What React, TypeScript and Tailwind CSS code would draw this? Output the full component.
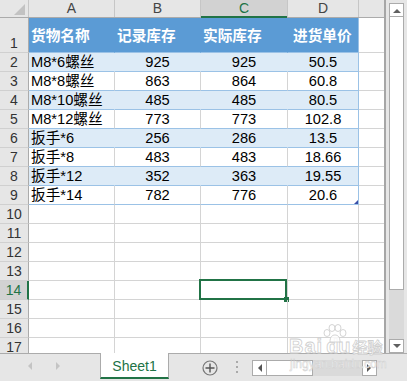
import React from "react";

const data: [string, string, string, string][] = [
  ["M8*6螺丝", "925", "925", "50.5"],
  ["M8*8螺丝", "863", "864", "60.8"],
  ["M8*10螺丝", "485", "485", "80.5"],
  ["M8*12螺丝", "773", "773", "102.8"],
  ["扳手*6", "256", "286", "13.5"],
  ["扳手*8", "483", "483", "18.66"],
  ["扳手*12", "352", "363", "19.55"],
  ["扳手*14", "782", "776", "20.6"],
];

function RowHead({ n, sel }: { n: number; sel?: boolean }) {
  return (
    <div
      className={
        sel
          ? "w-[29px] shrink-0 h-full border-r-2 border-r-[#217346] border-b border-b-[#d0d0d0] bg-[#d2d2d2] text-[#217346] flex items-end justify-center leading-[18px] text-[14px]"
          : "w-[29px] shrink-0 h-full border-r border-r-[#ababab] border-b border-b-[#d0d0d0] bg-[#e6e6e6] text-[#333] flex items-end justify-center leading-[18px] text-[14px]"
      }
    >
      <span>{n}</span>
    </div>
  );
}

function TriUp() {
  return (
    <svg width="8" height="5" viewBox="0 0 8 5">
      <path d="M0 5 L4 1 L8 5 Z" fill="#606060" />
    </svg>
  );
}
function TriDown() {
  return (
    <svg width="8" height="5" viewBox="0 0 8 5">
      <path d="M0 0 L4 4 L8 0 Z" fill="#606060" />
    </svg>
  );
}
function TriLeft({ c }: { c: string }) {
  return (
    <svg width="5" height="8" viewBox="0 0 5 8">
      <path d="M5 0 L1 4 L5 8 Z" fill={c} />
    </svg>
  );
}
function TriRight({ c }: { c: string }) {
  return (
    <svg width="5" height="8" viewBox="0 0 5 8">
      <path d="M0 0 L4 4 L0 8 Z" fill={c} />
    </svg>
  );
}

export default function App() {
  const emptyRows = [10, 11, 12, 13, 14, 15, 16, 17];
  return (
    <div className="relative w-[407px] h-[381px] overflow-hidden bg-[#e6e6e6] flex flex-col font-['Liberation_Sans','Noto_Sans_CJK_SC',sans-serif] text-[14.67px] text-black">
      <div className="flex h-[353px] shrink-0">
        <div className="relative w-[386px] h-[353px] shrink-0 overflow-hidden bg-white border-r-2 border-[#a6a6a6]">
          {/* column headers */}
          <div className="flex h-[18px] border-b border-[#ababab] bg-[#e6e6e6] text-[#444] text-[14px] leading-[17px]">
            <div className="w-[29px] shrink-0 border-r border-[#c6c6c6] flex items-end justify-end pr-[3px] pb-[2px]">
              <svg width="11" height="11" viewBox="0 0 11 11">
                <path d="M11 0 L11 11 L0 11 Z" fill="#c2c2c2" />
              </svg>
            </div>
            <div className="w-[86px] shrink-0 border-r border-[#c6c6c6] text-center">A</div>
            <div className="w-[86px] shrink-0 border-r border-[#c6c6c6] text-center">B</div>
            <div className="relative w-[87px] shrink-0 border-r border-[#c6c6c6] bg-[#d2d2d2] text-[#217346] text-center">
              C
              <div className="absolute left-0 right-0 bottom-[-1px] h-[2px] bg-[#217346]" />
            </div>
            <div className="w-[71px] shrink-0 border-r border-[#c6c6c6] text-center">D</div>
            <div className="flex-1" />
          </div>

          {/* row 1 header */}
          <div className="flex h-[35px]">
            <RowHead n={1} />
            <div className="w-[86px] shrink-0 border-r border-b border-r-[#5b9bd5] border-b-[#9bc2e6] bg-[#5b9bd5] text-white font-bold flex items-center pl-[2px] pt-[2px] whitespace-nowrap">货物名称</div>
            <div className="w-[86px] shrink-0 border-r border-b border-r-[#5b9bd5] border-b-[#9bc2e6] bg-[#5b9bd5] text-white font-bold flex items-center pl-[2px] pt-[2px] whitespace-nowrap">记录库存</div>
            <div className="w-[87px] shrink-0 border-r border-b border-r-[#5b9bd5] border-b-[#9bc2e6] bg-[#5b9bd5] text-white font-bold flex items-center pl-[2px] pt-[2px] whitespace-nowrap">实际库存</div>
            <div className="w-[71px] shrink-0 border-r border-b border-r-[#9bc2e6] border-b-[#9bc2e6] bg-[#5b9bd5] text-white font-bold flex items-center pl-[5px] pt-[2px] whitespace-nowrap">进货单价</div>
            <div className="flex-1 border-b border-b-[#d4d4d4]" />
          </div>

          {/* data rows */}
          {data.map((r, i) => {
            const band = i % 2 === 0;
            const last = i === data.length - 1;
            return (
              <div key={i} className="flex h-[19px] leading-[18px]">
                <RowHead n={i + 2} />
                <div className={band ? "w-[86px] shrink-0 border-r border-b border-r-[#ddebf7] border-b-[#9bc2e6] bg-[#ddebf7] pl-[2px] whitespace-nowrap" : "w-[86px] shrink-0 border-r border-b border-r-[#d4d4d4] border-b-[#9bc2e6] bg-white pl-[2px] whitespace-nowrap"}>{r[0]}</div>
                <div className={band ? "w-[86px] shrink-0 border-r border-b border-r-[#ddebf7] border-b-[#9bc2e6] bg-[#ddebf7] text-center" : "w-[86px] shrink-0 border-r border-b border-r-[#d4d4d4] border-b-[#9bc2e6] bg-white text-center"}>{r[1]}</div>
                <div className={band ? "w-[87px] shrink-0 border-r border-b border-r-[#ddebf7] border-b-[#9bc2e6] bg-[#ddebf7] text-center" : "w-[87px] shrink-0 border-r border-b border-r-[#d4d4d4] border-b-[#9bc2e6] bg-white text-center"}>{r[2]}</div>
                <div className={band ? "relative w-[71px] shrink-0 border-r border-b border-r-[#9bc2e6] border-b-[#9bc2e6] bg-[#ddebf7] text-center" : "relative w-[71px] shrink-0 border-r border-b border-r-[#9bc2e6] border-b-[#9bc2e6] bg-white text-center"}>
                  {r[3]}
                  {last && (
                    <svg className="absolute right-[0px] bottom-[0px]" width="4" height="4" viewBox="0 0 4 4">
                      <path d="M4 0 L4 4 L0 4 Z" fill="#3a4fa8" />
                    </svg>
                  )}
                </div>
                <div className="flex-1 border-b border-b-[#d4d4d4]" />
              </div>
            );
          })}

          {/* empty rows */}
          {emptyRows.map((n) => (
            <div key={n} className="flex h-[19px] leading-[18px]">
              <RowHead n={n} sel={n === 14} />
              <div className="w-[86px] shrink-0 border-r border-b border-[#d4d4d4]" />
              <div className="w-[86px] shrink-0 border-r border-b border-[#d4d4d4]" />
              <div className="relative w-[87px] shrink-0 border-r border-b border-[#d4d4d4]">
                {n === 14 && (
                  <>
                    <div className="absolute left-[-2px] top-[-2px] right-0 bottom-[-1px] border-2 border-[#217346]" />
                    <div className="absolute right-[-2px] bottom-[-3px] w-[5px] h-[5px] bg-[#217346]" />
                  </>
                )}
              </div>
              <div className="w-[71px] shrink-0 border-r border-b border-[#d4d4d4]" />
              <div className="flex-1 border-b border-b-[#d4d4d4]" />
            </div>
          ))}
        </div>

        {/* vertical scrollbar */}
        <div className="w-[21px] h-[353px] shrink-0 flex flex-col pt-[3px] px-[3px] bg-[#e6e6e6]">
          <div className="h-[14px] shrink-0 border border-[#ababab] bg-white flex items-center justify-center">
            <TriUp />
          </div>
          <div className="h-[273px] shrink-0 border border-t-0 border-[#ababab] bg-white" />
          <div className="flex-1 bg-[#dadada]" />
          <div className="h-[14px] shrink-0 border border-[#ababab] bg-white flex items-center justify-center">
            <TriDown />
          </div>
        </div>
      </div>

      {/* tab bar */}
      <div className="flex h-[28px] shrink-0 bg-[#e6e6e6]">
        <div className="w-[100px] shrink-0 border-t border-[#ababab] flex items-start pt-[8px]">
          <div className="ml-[27px]">
            <TriLeft c="#c4c4c4" />
          </div>
          <div className="ml-[24px]">
            <TriRight c="#c4c4c4" />
          </div>
        </div>
        <div className="w-[69px] shrink-0 h-[26px] border-x border-[#ababab] border-b-2 border-b-[#217346] bg-white text-[#217346] text-[14px] flex items-center justify-center leading-[16px] pt-[1px]">
          Sheet1
        </div>
        <div className="flex-1 border-t border-[#ababab] flex items-start">
          <div className="ml-[33px] mt-[6px]">
            <svg width="16" height="16" viewBox="0 0 16 16">
              <circle cx="8" cy="8" r="7" fill="none" stroke="#777" strokeWidth="1.2" />
              <path d="M8 3.5 V12.5 M3.5 8 H12.5" stroke="#555" strokeWidth="1.4" />
            </svg>
          </div>
          <div className="ml-[18px] mt-[7px] flex flex-col gap-[3px]">
            <div className="w-[2px] h-[2px] bg-[#aaa]" />
            <div className="w-[2px] h-[2px] bg-[#aaa]" />
            <div className="w-[2px] h-[2px] bg-[#aaa]" />
          </div>
          <div className="ml-[14px] mt-[6px] flex h-[16px] w-[125px]">
            <div className="w-[15px] shrink-0 border border-[#ababab] bg-white flex items-center justify-center">
              <TriLeft c="#555" />
            </div>
            <div className="w-[46px] shrink-0 border border-l-0 border-[#ababab] bg-white" />
            <div className="flex-1 bg-[#dadada]" />
            <div className="w-[15px] shrink-0 border border-[#ababab] bg-white flex items-center justify-center">
              <TriRight c="#555" />
            </div>
          </div>
        </div>
      </div>

      {/* watermark overlay */}
      <div className="absolute left-[289px] top-[336px] pointer-events-none select-none flex items-end whitespace-nowrap text-white/80 [-webkit-text-stroke:0.8px_#cfcfcf] font-bold">
        <span className="text-[20px] leading-[20px] tracking-[1px]">Bai</span>
        <span className="text-[20px] leading-[20px] ml-[3px]">du</span>
        <span className="ml-[2px] text-[15px] leading-[17px]">经验</span>
      </div>
      <svg className="absolute left-[322px] top-[324px] pointer-events-none" width="26" height="20" viewBox="0 0 26 20">
        <g fill="rgba(255,255,255,0.8)" stroke="#cfcfcf" strokeWidth="0.9">
          <ellipse cx="5" cy="9" rx="3" ry="3.5" />
          <ellipse cx="10" cy="4" rx="3" ry="3.5" />
          <ellipse cx="16" cy="4" rx="3" ry="3.5" />
          <ellipse cx="21" cy="9" rx="3" ry="3.5" />
          <path d="M8 18 C8 13 10 11 13 11 C16 11 18 13 18 18 Z" />
        </g>
      </svg>
      <div className="absolute left-[290px] top-[357px] pointer-events-none select-none whitespace-nowrap text-[12px] leading-[14px] text-white/80 [-webkit-text-stroke:0.5px_#cfcfcf]">
        jingyan.baidu.com
      </div>
    </div>
  );
}
